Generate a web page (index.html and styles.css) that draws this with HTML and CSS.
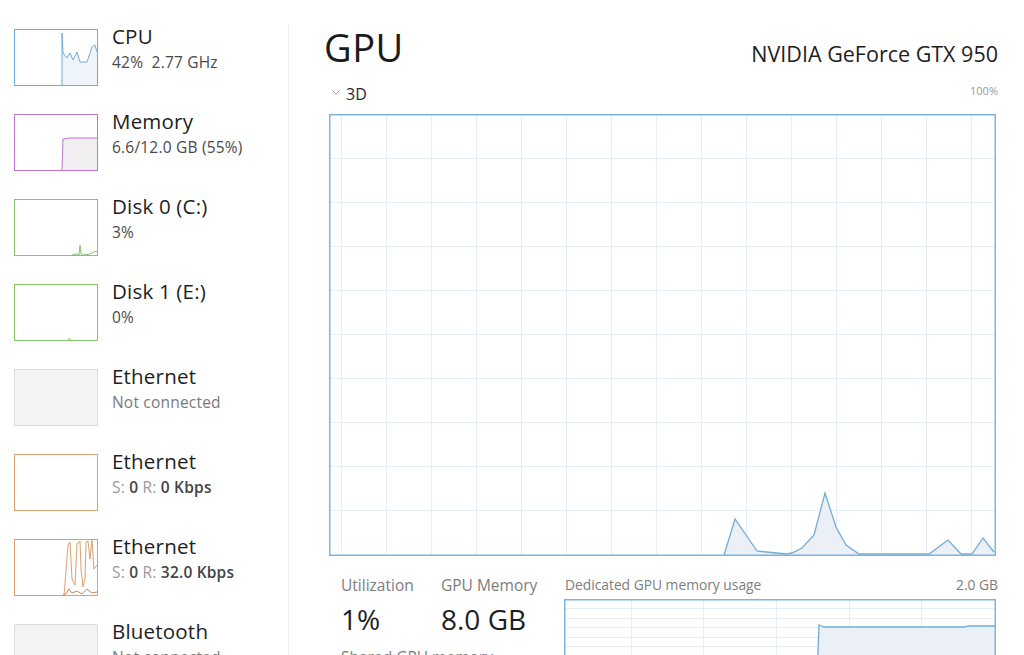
FILE: index.html
```html
<!DOCTYPE html>
<html lang="en">
<head>
    <meta charset="UTF-8">
    <title>Task Manager - GPU</title>
    <link rel="stylesheet" href="styles.css">
</head>
<body>
<div class="window">

    <!-- left list of devices -->
    <div class="sidebar">
        <div class="device">
            <svg class="thumb" viewBox="0 0 84 57">
                <rect x="0.5" y="0.5" width="83" height="56" fill="#fff" stroke="#6aaedc"/>
                <polygon points="48,56 48,4 49,24 53,29 56,24 59,31 63,23 66,33 73,33 78,18 81,16 83,23 83,56" fill="#eef4f9"/>
                <polyline points="48,56 48,4 49,24 53,29 56,24 59,31 63,23 66,33 73,33 78,18 81,16 83,23" fill="none" stroke="#6aaedc"/>
            </svg>
            <div class="device-text">
                <div class="device-name">CPU</div>
                <div class="device-info">42%&nbsp; 2.77 GHz</div>
            </div>
        </div>

        <div class="device">
            <svg class="thumb" viewBox="0 0 84 57">
                <rect x="0.5" y="0.5" width="83" height="56" fill="#fff" stroke="#bd77cf"/>
                <polygon points="48,56 49,25 55,24 83,24 83,56" fill="#f1eef2"/>
                <polyline points="48,56 49,25 55,24 83,24" fill="none" stroke="#bd77cf"/>
            </svg>
            <div class="device-text">
                <div class="device-name">Memory</div>
                <div class="device-info">6.6/12.0 GB (55%)</div>
            </div>
        </div>

        <div class="device">
            <svg class="thumb" viewBox="0 0 84 57">
                <rect x="0.5" y="0.5" width="83" height="56" fill="#fff" stroke="#86c56b"/>
                <polyline points="58,56 62,55 64,55 65,56 66,46 67,55 70,56 76,55 80,53 83,52" fill="none" stroke="#86c56b"/>
            </svg>
            <div class="device-text">
                <div class="device-name">Disk 0 (C:)</div>
                <div class="device-info">3%</div>
            </div>
        </div>

        <div class="device">
            <svg class="thumb" viewBox="0 0 84 57">
                <rect x="0.5" y="0.5" width="83" height="56" fill="#fff" stroke="#86c56b"/>
                <polyline points="54,55 57,55" fill="none" stroke="#86c56b"/>
            </svg>
            <div class="device-text">
                <div class="device-name">Disk 1 (E:)</div>
                <div class="device-info">0%</div>
            </div>
        </div>

        <div class="device">
            <svg class="thumb" viewBox="0 0 84 57">
                <rect x="0.5" y="0.5" width="83" height="56" fill="#f3f3f3" stroke="#dcdcdc"/>
            </svg>
            <div class="device-text">
                <div class="device-name">Ethernet</div>
                <div class="device-info muted">Not connected</div>
            </div>
        </div>

        <div class="device">
            <svg class="thumb" viewBox="0 0 84 57">
                <rect x="0.5" y="0.5" width="83" height="56" fill="#fff" stroke="#dc9f72"/>
            </svg>
            <div class="device-text">
                <div class="device-name">Ethernet</div>
                <div class="device-info"><span class="key">S:</span> <b>0</b> <span class="key">R:</span> <b>0 Kbps</b></div>
            </div>
        </div>

        <div class="device">
            <svg class="thumb" viewBox="0 0 84 57">
                <rect x="0.5" y="0.5" width="83" height="56" fill="#fff" stroke="#dc9f72"/>
                <polyline points="50,56 51,45 54,6 56,3 58,40 61,46 63,5 66,2 67,30 69,48 71,40 72,3 74,2 76,20 78,1 80,30 83,26" fill="none" stroke="#dc9f72"/>
                <polyline points="49,56 52,55 55,50 58,54 63,52 68,55 73,50 78,54 83,53" fill="none" stroke="#c98552"/>
            </svg>
            <div class="device-text">
                <div class="device-name">Ethernet</div>
                <div class="device-info"><span class="key">S:</span> <b>0</b> <span class="key">R:</span> <b>32.0 Kbps</b></div>
            </div>
        </div>

        <div class="device">
            <svg class="thumb" viewBox="0 0 84 57">
                <rect x="0.5" y="0.5" width="83" height="56" fill="#f3f3f3" stroke="#dcdcdc"/>
            </svg>
            <div class="device-text">
                <div class="device-name">Bluetooth</div>
                <div class="device-info muted">Not connected</div>
            </div>
        </div>
    </div>

    <!-- GPU details -->
    <div class="main">
        <div class="title-row">
            <h1 class="title">GPU</h1>
            <div class="gpu-name">NVIDIA GeForce GTX 950</div>
        </div>

        <div class="chart-head">
            <span class="engine">
                <svg class="chev" viewBox="0 0 8 5"><polyline points="0.5,0.5 4,4 7.5,0.5" fill="none" stroke="#9a9a9a" stroke-width="1"/></svg>
                3D
            </span>
            <span class="scale">100%</span>
        </div>

        <svg class="big-chart" viewBox="0 0 667 442">
            <g stroke="#e3eef7" stroke-width="1">
                <line x1="12.5" y1="0" x2="12.5" y2="442"/>
                <line x1="57.5" y1="0" x2="57.5" y2="442"/>
                <line x1="102.5" y1="0" x2="102.5" y2="442"/>
                <line x1="147.5" y1="0" x2="147.5" y2="442"/>
                <line x1="192.5" y1="0" x2="192.5" y2="442"/>
                <line x1="237.5" y1="0" x2="237.5" y2="442"/>
                <line x1="282.5" y1="0" x2="282.5" y2="442"/>
                <line x1="327.5" y1="0" x2="327.5" y2="442"/>
                <line x1="372.5" y1="0" x2="372.5" y2="442"/>
                <line x1="417.5" y1="0" x2="417.5" y2="442"/>
                <line x1="462.5" y1="0" x2="462.5" y2="442"/>
                <line x1="507.5" y1="0" x2="507.5" y2="442"/>
                <line x1="552.5" y1="0" x2="552.5" y2="442"/>
                <line x1="597.5" y1="0" x2="597.5" y2="442"/>
                <line x1="642.5" y1="0" x2="642.5" y2="442"/>
                <line x1="0" y1="44.5" x2="667" y2="44.5"/>
                <line x1="0" y1="88.5" x2="667" y2="88.5"/>
                <line x1="0" y1="132.5" x2="667" y2="132.5"/>
                <line x1="0" y1="176.5" x2="667" y2="176.5"/>
                <line x1="0" y1="220.5" x2="667" y2="220.5"/>
                <line x1="0" y1="264.5" x2="667" y2="264.5"/>
                <line x1="0" y1="308.5" x2="667" y2="308.5"/>
                <line x1="0" y1="352.5" x2="667" y2="352.5"/>
                <line x1="0" y1="396.5" x2="667" y2="396.5"/>
            </g>
            <polygon points="395,441 406,405 428,437 457,440 463,439 473,434 485,421 496,379 507,413 517,431 530,440 552,440 600,440 619,426 632,440 643,440 654,424 665,438 665,441" fill="#eaf0f6"/>
            <polyline points="395,441 406,405 428,437 457,440 463,439 473,434 485,421 496,379 507,413 517,431 530,440 552,440 600,440 619,426 632,440 643,440 654,424 665,438" fill="none" stroke="#74acd6" stroke-width="1.3"/>
            <rect x="0.75" y="0.75" width="665.5" height="440.5" fill="none" stroke="#7db5dd" stroke-width="1.5"/>
        </svg>

        <div class="stats">
            <div class="stat-cols">
                <div class="stat">
                    <div class="stat-label">Utilization</div>
                    <div class="stat-value">1%</div>
                    <div class="stat-label next">Shared GPU memory</div>
                </div>
                <div class="stat">
                    <div class="stat-label">GPU Memory</div>
                    <div class="stat-value">8.0 GB</div>
                </div>
            </div>

            <div class="mem-box">
                <div class="mem-head">
                    <span>Dedicated GPU memory usage</span>
                    <span>2.0 GB</span>
                </div>
                <svg class="mem-chart" viewBox="0 0 432 80">
                    <g stroke="#e3eef7" stroke-width="1">
                        <line x1="67.5" y1="0" x2="67.5" y2="80"/>
                        <line x1="139.5" y1="0" x2="139.5" y2="80"/>
                        <line x1="212.5" y1="0" x2="212.5" y2="80"/>
                        <line x1="285.5" y1="0" x2="285.5" y2="80"/>
                        <line x1="357.5" y1="0" x2="357.5" y2="80"/>
                        <line x1="0" y1="9.5" x2="432" y2="9.5"/>
                        <line x1="0" y1="19.5" x2="432" y2="19.5"/>
                        <line x1="0" y1="28.5" x2="432" y2="28.5"/>
                        <line x1="0" y1="38.5" x2="432" y2="38.5"/>
                        <line x1="0" y1="47.5" x2="432" y2="47.5"/>
                        <line x1="0" y1="57.5" x2="432" y2="57.5"/>
                        <line x1="0" y1="66.5" x2="432" y2="66.5"/>
                    </g>
                    <polygon points="253,80 255,26 260,28 400,28 405,27 431,27 431,80" fill="#eaf0f6"/>
                    <polyline points="253,80 255,26 260,28 400,28 405,27 431,27" fill="none" stroke="#74acd6" stroke-width="1.3"/>
                    <rect x="0.75" y="0.75" width="430.5" height="90" fill="none" stroke="#7db5dd" stroke-width="1.5"/>
                </svg>
            </div>
        </div>
    </div>

</div>
</body>
</html>
```

FILE: styles.css
```css
html, body {
    margin: 0;
    padding: 0;
    background: #fff;
    height: 655px;
    overflow: hidden;
}

body {
    font-family: "Open Sans", "Noto Sans", sans-serif;
    color: #1b1b1b;
}

.window {
    display: flex;
    height: 655px;
}

/* sidebar */
.sidebar {
    width: 274px;
    margin-top: 25px;
    padding: 4px 0 0 14px;
    border-right: 1px solid #ececec;
    flex-shrink: 0;
}

.device {
    display: flex;
    gap: 14px;
    height: 85px;
}

.thumb {
    width: 84px;
    height: 57px;
    flex-shrink: 0;
    display: block;
}

.device-text {
    margin-top: -7px;
    white-space: nowrap;
}

.device-name {
    font-size: 20.5px;
    line-height: 28px;
    letter-spacing: 0.2px;
    color: #1e1e1e;
}

.device-info {
    font-size: 15.5px;
    line-height: 25px;
    letter-spacing: 0.2px;
    color: #4a4a4a;
}

.device-info.muted {
    color: #7a7a7a;
}

.device-info .key {
    color: #9a9a9a;
}

.device-info b {
    font-weight: 600;
    color: #444;
}

/* main panel */
.main {
    flex: 1;
    padding: 0 26px 0 35px;
}

.title-row {
    display: flex;
    justify-content: space-between;
    align-items: baseline;
    margin-top: 22px;
}

.title {
    margin: 0;
    font-size: 38px;
    font-weight: 400;
    line-height: 50px;
    letter-spacing: 0.5px;
}

.gpu-name {
    font-size: 21.5px;
    color: #1e1e1e;
}

.chart-head {
    display: flex;
    justify-content: space-between;
    align-items: flex-end;
    margin: 9px 0 9px 8px;
    height: 24px;
}

.engine {
    display: flex;
    align-items: center;
    gap: 6px;
    font-size: 16px;
    color: #2a2a2a;
}

.chev {
    width: 8px;
    height: 5px;
    margin-top: -4px;
}

.scale {
    font-size: 11px;
    color: #9a9a9a;
    align-self: flex-start;
    margin-top: 2px;
}

.big-chart {
    display: block;
    width: 667px;
    height: 442px;
    margin-left: 5px;
}

.stats {
    display: flex;
    margin-top: 19px;
}

.stat-cols {
    display: grid;
    grid-template-columns: 100px auto;
    box-sizing: border-box;
    width: 228px;
    padding-left: 17px;
    white-space: nowrap;
}

.stat {
    display: flex;
    flex-direction: column;
}

.stat-label {
    font-size: 15.5px;
    color: #7d7d7d;
    line-height: 20px;
}

.stat-value {
    font-size: 28px;
    line-height: 36px;
    margin-top: 6px;
    color: #1e1e1e;
}

.stat-label.next {
    margin-top: 10px;
}

.mem-box {
    flex: 1;
    padding-left: 12px;
}

.mem-head {
    display: flex;
    justify-content: space-between;
    font-size: 13.8px;
    color: #7d7d7d;
    line-height: 20px;
    padding: 0 0 0 1px;
}

.mem-chart {
    display: block;
    width: 432px;
    height: 80px;
    margin-top: 4px;
}
```
